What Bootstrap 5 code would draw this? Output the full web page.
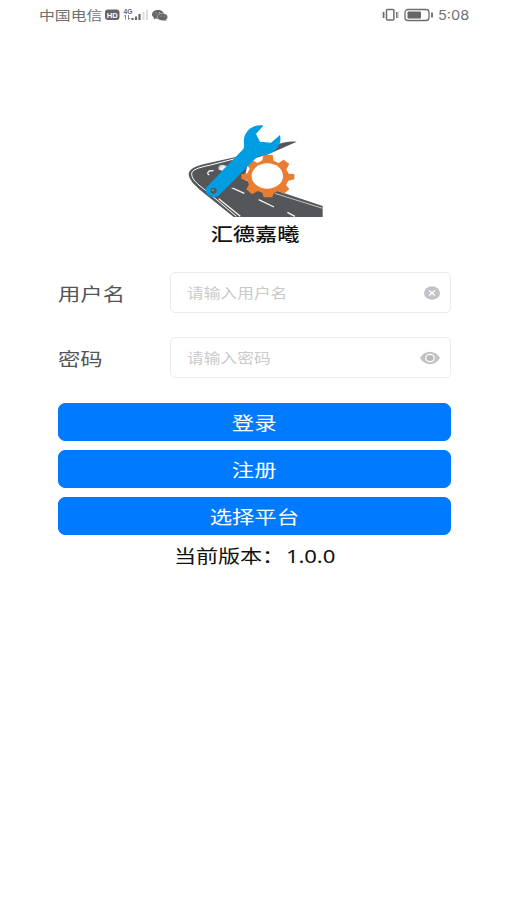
<!DOCTYPE html>
<html lang="zh-CN">
<head>
<meta charset="utf-8">
<meta name="viewport" content="width=device-width, initial-scale=1">
<title>汇德嘉曦</title>
<link href="https://cdn.jsdelivr.net/npm/bootstrap@5.3.0/dist/css/bootstrap.min.css" rel="stylesheet">
<style>
body{font-family:"Noto Sans","Noto Sans CJK SC",sans-serif;background:#fff;min-height:900px;overflow:hidden}
.phone{width:507px;height:900px}
.wide{display:inline-block;transform:scaleX(1.23);white-space:nowrap}
.from-left{transform-origin:left center}
.status{height:30px;padding:0 39px 0 39px;color:#707070;font-size:13px;line-height:30px}
.carrier{width:66px}
.carrier .wide{transform:scaleX(1.22)}
.clock{width:30px;font-family:Inter,"Noto Sans",sans-serif}
.clock .wide{transform:scaleX(1.12)}
.logo{width:150px;height:110px;margin:85px 0 0 3px}
.brand{font-size:18px;line-height:26px;margin:-4px 0 0 2px;color:#111;font-weight:500}
.login{width:393px;margin-left:58px;margin-top:25px}
.field{height:41px;margin-bottom:24px}
.field-name{width:112px;font-size:18px;color:#555;padding-top:3px}
.field-name .wide{transform:scaleX(1.24)}
.entry{height:41px;border:1.5px solid #ebebeb;border-radius:5px;padding:0 10px 0 16px;font-size:13.6px;color:#cacaca}
.entry .wide{padding-top:1px}
.action{--bs-btn-bg:#007aff;--bs-btn-border-color:#007aff;--bs-btn-color:#fff;height:38px;border-radius:7px;padding:2px 0 0;font-size:18.2px;line-height:34px}
.actions{gap:9px;padding-top:1px}
.version{font-size:18px;line-height:26px;margin:8px 0 0 2px;color:#111}
.version .wide{letter-spacing:-.1px;word-spacing:-3px}
</style>
</head>
<body>
<main class="phone d-flex flex-column">
  <header class="status d-flex align-items-center justify-content-between">
    <div class="d-flex align-items-center">
      <span class="carrier"><span class="wide from-left">中国电信</span></span>
      <svg width="64" height="16" viewBox="0 0 64 16">
        <rect y="2.500" width="14.500" height="10.500" rx="3" fill="#666"/>
        <text x="7.200" y="10.500" text-anchor="middle" textLength="11" lengthAdjust="spacingAndGlyphs" font-family="Liberation Sans, sans-serif" font-size="7.500" font-weight="700" fill="#fff">HD</text>
        <text x="18.500" y="6.800" textLength="9" lengthAdjust="spacingAndGlyphs" font-family="Liberation Sans, sans-serif" font-size="6.500" font-weight="700" fill="#666">4G</text>
        <path d="M20.500 8v4.500M19 9.500l1.500-1.500M23.500 8v4.500M25 11l-1.500 1.500" stroke="#888" fill="none"/>
        <path d="M27.500 13v-2M31 13V9.500M34.500 13V7" stroke="#666" stroke-width="2.200"/>
        <path d="M38.500 13V5M42 13V3" stroke="#ddd" stroke-width="2"/>
        <path d="M53 3c3.500 0 6 2 6 4.500S56.500 12 53 12l-2.500-.5-2 1 .4-2C47.600 9.700 47 8.700 47 7.500 47 5 49.500 3 53 3z" fill="#666"/>
        <path d="M57.500 6.300c2.900 0 5.200 1.700 5.200 3.800 0 1-.6 2-1.500 2.700l.3 1.500-1.800-.8c-3.900 1-7.400-.9-7.400-3.400 0-2.100 2.300-3.800 5.200-3.800z" fill="#666" stroke="#fff" stroke-width=".4"/>
        <circle cx="51" cy="6" r=".6" fill="#ccc"/><circle cx="54.500" cy="5.700" r=".6" fill="#ccc"/><circle cx="56" cy="9" r=".5" fill="#bbb"/><circle cx="59.500" cy="9" r=".5" fill="#bbb"/>
      </svg>
    </div>
    <div class="d-flex align-items-center">
      <svg width="57" height="16" viewBox="0 0 57 16" fill="none" stroke="#6c6c6c">
        <rect x="5.500" y="2.500" width="7.400" height="10.500" rx="1" stroke-width="1.500"/>
        <path d="M2.700 5v6M15.800 5v6" stroke-width="1.500"/><path d="M1.200 4.500v6.500M17.300 4.500V11" stroke="#ccc"/>
        <rect x="24" y="2.500" width="24" height="11" rx="3" stroke-width="1.300"/>
        <rect x="26.500" y="4.500" width="13.500" height="7" rx="1" fill="#666" stroke="none"/>
        <path d="M51 5.500v5" stroke-width="1.800"/>
      </svg>
      <span class="clock"><span class="wide from-left">5:08</span></span>
    </div>
  </header>

  <svg class="logo align-self-center flex-shrink-0" viewBox="0 0 450 330">
    <path d="M350 80C328 78 310 82 282 91L180 123L90 143C52 151 26 160 26 178C27 195 45 212 64 228L161 306H428V273L300 230L185 192L180 142L265 118Z" fill="#55565a"/>
    <path d="M177 128L92 150C53 158 34 165 35 178C36 194 55 209 74 224L169 304" fill="none" stroke="#fff" stroke-width="3"/>
    <path d="M116 251L181 304M153 217L193 235M236 254L282 276M322 292L345 304M88 180Q78 176 88 168L101 167" fill="none" stroke="#f3f3f3" stroke-width="4"/>
    <path d="M284 235L428 280" stroke="#c4c4c6" stroke-width="3"/>
    <path d="M165 187L184 166L202 152L190 204L151 221Z" fill="#55565a"/>
    <path d="M116 164Q112 151 127 149L142 153L131 169Z" fill="#d4d7dc"/>
    <path d="M122 164L133 154" stroke="#fff" stroke-width="5"/>
    <path d="M250 120H278L281 137L296 144L311 134L328 147L319 163L326 176L343 177V193L325 197L318 210L328 222L311 237L295 228L281 234L277 247H251L247 233L233 228L216 238L199 223L207 208L201 196L184 192V178L202 175L209 161L200 148L216 134L232 144L247 136Z" fill="#ea7d30"/>
    <ellipse cx="262" cy="183" rx="47" ry="38" fill="#fff"/>
    <path d="M250 32C224 26 198 44 193 67C189 82 195 91 190 102L78 218C73 226 80 238 91 244C102 250 113 246 120 238L231 126C238 119 252 123 267 116C292 108 306 85 300 60L273 83L240 80L228 57Z" fill="#009de2"/>
    <circle cx="101" cy="227" r="9" fill="#55565a"/><circle cx="99" cy="226" r="3" fill="#8b9298"/>
  </svg>
  <h1 class="brand text-center"><span class="wide">汇德嘉曦</span></h1>

  <form class="login">
    <div class="field d-flex align-items-center">
      <label class="field-name"><span class="wide from-left">用户名</span></label>
      <div class="entry flex-grow-1 d-flex align-items-center justify-content-between">
        <span class="wide from-left">请输入用户名</span>
        <svg width="16" height="14" viewBox="0 0 16 14"><ellipse cx="8" cy="7" rx="8" ry="6.700" fill="#c2c3c7"/><path d="M5 4.500l6 5M11 4.500l-6 5" stroke="#fff" stroke-width="1.400"/></svg>
      </div>
    </div>
    <div class="field d-flex align-items-center">
      <label class="field-name"><span class="wide from-left">密码</span></label>
      <div class="entry flex-grow-1 d-flex align-items-center justify-content-between">
        <span class="wide from-left">请输入密码</span>
        <svg width="20" height="14" viewBox="0 0 20 14"><path d="M0 7C5-1.300 15-1.300 20 7 15 15.300 5 15.300 0 7z" fill="#c2c3c7"/><ellipse cx="10" cy="7" rx="4.200" ry="3.600" fill="#b9babe" stroke="#fff" stroke-width="1.300"/></svg>
      </div>
    </div>
    <div class="actions d-grid">
      <button type="button" class="btn btn-primary action"><span class="wide">登录</span></button>
      <button type="button" class="btn btn-primary action"><span class="wide">注册</span></button>
      <button type="button" class="btn btn-primary action"><span class="wide">选择平台</span></button>
    </div>
  </form>
  <p class="version text-center"><span class="wide">当前版本： 1.0.0</span></p>
</main>
<script src="https://cdn.jsdelivr.net/npm/bootstrap@5.3.0/dist/js/bootstrap.bundle.min.js"></script>
</body>
</html>
